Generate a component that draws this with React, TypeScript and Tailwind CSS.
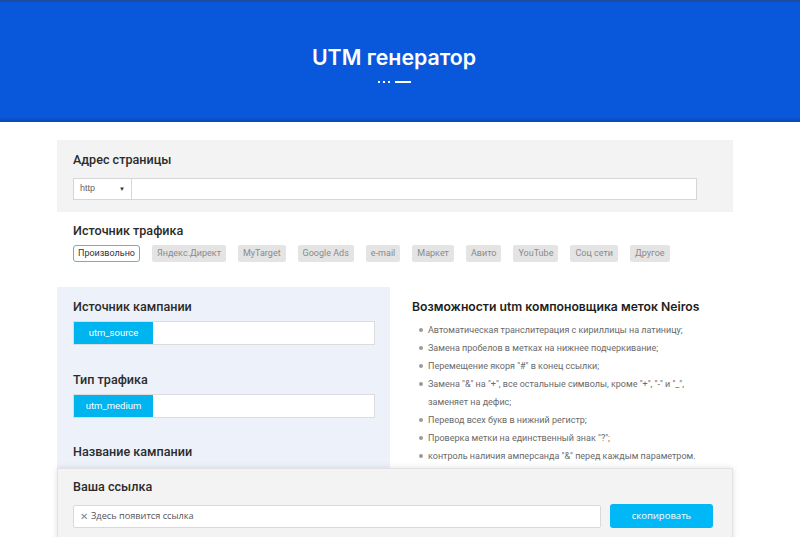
import React from "react";

const chips = ["Яндекс.Директ", "MyTarget", "Google Ads", "e-mail", "Маркет", "Авито", "YouTube", "Соц сети", "Другое"];

const bullets: string[][] = [
  ["Автоматическая транслитерация с кириллицы на латиницу;"],
  ["Замена пробелов в метках на нижнее подчеркивание;"],
  ["Перемещение якоря \"#\" в конец ссылки;"],
  ["Замена \"&\" на \"+\", все остальные символы, кроме \"+\", \"-\" и \"_\",", "заменяет на дефис;"],
  ["Перевод всех букв в нижний регистр;"],
  ["Проверка метки на единственный знак \"?\";"],
  ["контроль наличия амперсанда \"&\" перед каждым параметром."],
];

const head = "text-[12.6px] leading-[20px] font-medium text-[#2b2b2b]";
const headFont = { fontFamily: "Roboto, sans-serif" };

function Field({ title, label, mt }: { title: string; label: string; mt: string }) {
  return (
    <div className={mt}>
      <div className={head} style={headFont}>{title}</div>
      <div className="mt-[4px] flex h-[24px] w-[302px] border border-[#dcdcdc] bg-white">
        <div className="flex w-[79px] items-center justify-center bg-[#00b4f0] text-[9.5px] text-white" style={{ fontFamily: "Roboto, sans-serif" }}>
          {label}
        </div>
      </div>
    </div>
  );
}

export default function App() {
  return (
    <div className="relative h-[537px] w-[800px] overflow-hidden bg-white" style={{ fontFamily: "'Open Sans', 'Liberation Sans', sans-serif" }}>
      {/* Header */}
      <div className="relative h-[122px] bg-[#0958db]">
        <div className="h-[2px] bg-[#1e4b9e]" />
        <div className="flex flex-col items-center pr-[12px] pt-[41px]">
          <div className="text-[21.3px] leading-[28px] font-semibold text-white" style={{ fontFamily: "Inter, sans-serif" }}>
            UTM генератор
          </div>
          <div className="mt-[10px] flex items-center gap-[3px]">
            <span className="h-[2px] w-[2px] bg-white" />
            <span className="h-[2px] w-[2px] bg-white" />
            <span className="h-[2px] w-[2px] bg-white" />
            <span className="ml-[2px] h-[2px] w-[16px] bg-white" />
          </div>
        </div>
        <div className="absolute bottom-0 left-0 right-0 h-[5px] bg-gradient-to-b from-[#0958db] to-[#0a46ad]" />
      </div>

      {/* Address panel */}
      <div className="ml-[57px] mt-[18px] w-[676px] bg-[#f3f3f3] px-[16px] pb-[12px] pt-[10px]">
        <div className={head} style={headFont}>Адрес страницы</div>
        <div className="mt-[8px] flex h-[22px] w-[624px] border border-[#d6d6d6] bg-white">
          <div className="flex w-[58px] items-center justify-between border-r border-[#d6d6d6] pl-[6px] pr-[6px] text-[9px] text-[#666]" style={{ fontFamily: "'Liberation Sans', sans-serif" }}>
            <span>http</span>
            <span className="text-[6px] text-[#333]">▼</span>
          </div>
        </div>
      </div>

      {/* Traffic source */}
      <div className="ml-[73px] mt-[9px]">
        <div className={head} style={headFont}>Источник трафика</div>
        <div className="mt-[4px] flex items-center gap-[12px] text-[9px]" style={{ fontFamily: "Roboto, sans-serif" }}>
          <div className="flex h-[17px] items-center rounded-[3px] border border-[#5bb3de] bg-white px-[4px] text-[#333]">Произвольно</div>
          {chips.map((c) => (
            <div key={c} className="flex h-[17px] items-center rounded-[2px] bg-[#e4e4e4] px-[5px] text-[#8a8a8a]">
              {c}
            </div>
          ))}
        </div>
      </div>

      {/* Lower section */}
      <div className="ml-[57px] mt-[25px] flex">
        <div className="h-[260px] w-[333px] bg-[#edf2fa] px-[16px] pt-[10px]">
          <Field title="Источник кампании" label="utm_source" mt="" />
          <Field title="Тип трафика" label="utm_medium" mt="mt-[25px]" />
          <div className={`mt-[24px] ${head}`} style={headFont}>Название кампании</div>
        </div>
        <div className="ml-[22px] pt-[10px]">
          <div className="text-[12.2px] leading-[20px] font-semibold text-[#1e1e1e]" style={{ fontFamily: "Inter, sans-serif" }}>
            Возможности utm компоновщика меток Neiros
          </div>
          <ul className="mt-[4px] text-[9px] text-[#6a6a6a]" style={{ fontFamily: "Roboto, sans-serif" }}>
            {bullets.map((b, i) => (
              <li key={i} className="flex">
                <span className="ml-[7px] mt-[7px] h-[4px] w-[4px] shrink-0 rounded-full bg-[#9a9a9a]" />
                <div className="ml-[5px]">
                  {b.map((line, j) => (
                    <div key={j} className="leading-[18px]">{line}</div>
                  ))}
                </div>
              </li>
            ))}
          </ul>
        </div>
      </div>

      {/* Sticky result bar */}
      <div className="absolute left-[57px] top-[468px] h-[80px] w-[676px] border border-[#e2e2e2] bg-[#f3f3f3] px-[15px] pt-[8px] shadow-[0_0_6px_rgba(0,0,0,0.12)]">
        <div className={head} style={headFont}>Ваша ссылка</div>
        <div className="mt-[7px] flex items-center">
          <div className="flex h-[23px] w-[528px] items-center rounded-[2px] border border-[#d9d9d9] bg-white pl-[6px] text-[9.2px] text-[#555]">
            <span className="mr-[3px] text-[10px] text-[#888]">✕</span>Здесь появится ссылка
          </div>
          <div className="ml-[9px] flex h-[24px] w-[103px] items-center justify-center rounded-[3px] bg-[#00b8f5] text-[9.5px] text-white">
            скопировать
          </div>
        </div>
      </div>
    </div>
  );
}
